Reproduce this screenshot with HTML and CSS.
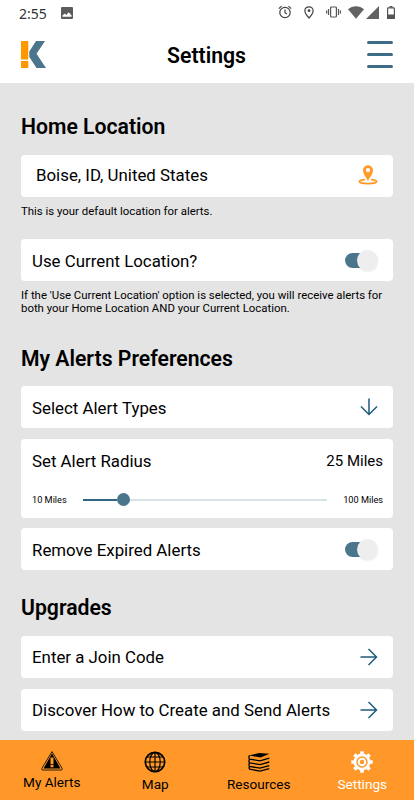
FILE: index.html
```html
<!DOCTYPE html>
<html lang="en">
<head>
    <meta charset="UTF-8">
    <meta name="viewport" content="width=device-width, initial-scale=1.0">
    <title>Settings</title>
    <link rel="stylesheet" href="styles.css">
</head>
<body>
    <div class="status-bar">
        <span class="time">2:55</span>
        <svg class="picture" width="12" height="12" viewBox="0 0 12 12"><rect width="12" height="12" rx="1" fill="#5c5c5c"/><path d="M1.5 9.8V8.6L3.7 6.4l1.5 1.5 2.5-2.6 2.8 3v1.5z" fill="#fff"/></svg>
        <div class="status-icons">
            <svg width="14" height="14" viewBox="0 0 14 14" fill="none" stroke="#444" stroke-width="1.2"><circle cx="7" cy="7.500" r="5.200"/><path d="M7 4.500v3.200l2 1.300M.8 3.600L3.600 1.100M13.200 3.600L10.400 1.100"/></svg>
            <svg class="pin-icon" width="10" height="13" viewBox="0 0 10 13"><path d="M5 .8C2.600.8.9 2.500.9 4.800.9 7.700 5 12 5 12s4.100-4.300 4.100-7.200C9.100 2.500 7.400.8 5 .8z" fill="none" stroke="#444" stroke-width="1.200"/><circle cx="5" cy="4.700" r="1.400" fill="#444"/></svg>
            <svg class="vibrate-icon" width="15" height="12" viewBox="0 0 15 12" fill="none" stroke="#555" stroke-width="1.200"><rect x="4.600" y="1" width="5.800" height="10" rx=".8"/><path d="M2.500 3v6M.6 4.500v3M12.500 3v6M14.400 4.500v3"/></svg>
            <svg class="wifi-icon" width="16" height="13" viewBox="0 0 16 13"><path d="M0 3.200C4.500-.8 11.500-.8 16 3.200L8 12.800z" fill="#626262"/></svg>
            <svg class="signal-icon" width="13" height="13" viewBox="0 0 13 13"><path d="M13 0v13H0z" fill="#626262"/></svg>
            <svg class="battery-icon" width="8" height="13" viewBox="0 0 8 13"><path d="M2.500 0h3v1.500h-3zM0 8.500h8V13H0z" fill="#555"/><rect x=".6" y="1.800" width="6.800" height="10.600" rx=".6" fill="none" stroke="#555" stroke-width="1.200"/></svg>
        </div>
    </div>
    <header class="header">
        <svg class="logo" width="25" height="27" viewBox="0 0 25 27">
            <path d="M0 0h7.300v18.500H0zM0 20h7.300v7H0z" fill="#ff9800"/>
            <path d="M15 0h9l-8.500 12.800L25 27h-9.500L8.300 16V10.500z" fill="#4b758c"/>
        </svg>
        <h1>Settings</h1>
        <div class="menu"><span></span><span></span><span></span></div>
    </header>

    <main>
        <h2>Home Location</h2>
        <div class="card location">
            <span>Boise, ID, United States</span>
            <svg width="20" height="20" viewBox="0 0 20 20">
                <path d="M7 14.600c-3 .2-5.600.9-5.600 2 0 1.200 3.700 2 8.600 2s8.600-.8 8.600-2c0-1.100-2.600-1.800-5.600-2" fill="none" stroke="#ff9a28" stroke-width="1.900"/>
                <path fill-rule="evenodd" d="M10 .2a5 5 0 0 0-5 5c0 3.800 3.300 7 5 10.800 1.700-3.800 5-7 5-10.800a5 5 0 0 0-5-5zm0 2.900a2.100 2.100 0 1 1 0 4.200 2.100 2.100 0 0 1 0-4.200z" fill="#ff9a28"/>
            </svg>
        </div>
        <p class="note">This is your default location for alerts.</p>
        <div class="card">
            <span class="label">Use Current Location?</span>
            <div class="toggle"></div>
        </div>
        <p class="note">If the 'Use Current Location' option is selected, you will receive alerts for<br>both your Home Location AND your Current Location.</p>

        <h2 class="preferences">My Alerts Preferences</h2>
        <div class="card-list">
            <div class="card">
                <span class="label">Select Alert Types</span>
                <svg class="arrow" width="18" height="18" viewBox="0 0 18 18"><path d="M9 .5v16M1 8.500l8 8 8-8"/></svg>
            </div>
            <div class="card radius">
                <div class="radius-top">
                    <span>Set Alert Radius</span>
                    <span class="miles">25 Miles</span>
                </div>
                <div class="radius-slider">
                    <span>10 Miles</span>
                    <div class="track"><div class="fill"></div><div class="thumb"></div></div>
                    <span>100 Miles</span>
                </div>
            </div>
            <div class="card">
                <span class="label">Remove Expired Alerts</span>
                <div class="toggle"></div>
            </div>
        </div>

        <h2 class="upgrades">Upgrades</h2>
        <div class="card-list">
            <div class="card">
                <span>Enter a Join Code</span>
                <svg class="arrow" width="18" height="18" viewBox="0 0 18 18"><path d="M.5 9h16M8.500 1l8 8-8 8"/></svg>
            </div>
            <div class="card">
                <span>Discover How to Create and Send Alerts</span>
                <svg class="arrow" width="18" height="18" viewBox="0 0 18 18"><path d="M.5 9h16M8.500 1l8 8-8 8"/></svg>
            </div>
        </div>
    </main>

    <nav class="tabs">
        <a class="tab">
            <svg width="22" height="20" viewBox="0 0 22 20"><path d="M11 .6L21.200 17.500Q21.500 19 20 19H2Q.5 19 .8 17.500z" fill="none" stroke="#111" stroke-width=".9" stroke-linejoin="round"/><path d="M11 2.400L19.500 17.500h-17z" fill="#000"/><path d="M9.500 6.500h3v6.700h-3zM9.500 14h3v2.300h-3z" fill="#ff9a28"/></svg>
            <span>My Alerts</span>
        </a>
        <a class="tab">
            <svg width="22" height="22" viewBox="0 0 22 22" fill="none" stroke="#000" stroke-width="1.200"><circle cx="11" cy="11" r="9.700" stroke-width="1.700"/><ellipse cx="11" cy="11" rx="5.200" ry="9.700"/><path d="M11 1v20M1 11h20M3 6h16M3 16h16"/></svg>
            <span>Map</span>
        </a>
        <a class="tab">
            <svg width="22" height="22" viewBox="0 0 22 22"><path d="M1 4.500L11 2l10.500.8L12.500 6.500z" fill="#000"/><g fill="none" stroke="#000" stroke-width="1.300"><path d="M1.500 4.400Q.3 6.600 1.500 8.100l10.500 1.700 9.300-2.600"/><path d="M1.500 8.300Q.4 10.200 1.500 11.800l10.500 1.800 9.300-2.600"/><path d="M1.500 12Q.4 13.900 1.500 15.400l10.500 1.800 9.300-2.600"/><path d="M1.500 15.600Q.6 17 1.700 18.200L12 20.100l9.300-2.500"/></g></svg>
            <span>Resources</span>
        </a>
        <a class="tab active">
            <svg width="22" height="22" viewBox="0 0 22 22" fill="none" stroke="#fff"><circle cx="11" cy="11" r="7.100" stroke-width="2.800"/><circle cx="11" cy="11" r="3.200" stroke-width="2"/><path d="M11 .3v3.500M11 18.200v3.500M.3 11h3.500M18.200 11h3.500M3.430 3.430l2.500 2.500M16.070 16.070l2.500 2.500M3.430 18.570l2.500-2.500M16.070 5.930l2.500-2.500" stroke-width="3.600"/></svg>
            <span>Settings</span>
        </a>
    </nav>
</body>
</html>
```
FILE: styles.css
```css
* {
    box-sizing: border-box;
}

body {
    margin: 0;
    height: 800px;
    display: flex;
    flex-direction: column;
    overflow: hidden;
    font-family: Roboto, sans-serif;
    color: #000;
    background-color: #e4e4e4;
}

svg {
    display: block;
    flex-shrink: 0;
}

.status-bar {
    height: 26px;
    display: flex;
    align-items: center;
    padding: 0 19px;
    background-color: #fff;
}

.time {
    width: 42px;
    font-family: "Noto Sans", sans-serif;
    font-size: 14px;
    color: #333;
}

.status-icons {
    display: flex;
    align-items: center;
    margin-left: auto;
    padding-bottom: 2px;
}

.pin-icon {
    margin-left: 12px;
}

.vibrate-icon {
    margin-left: 12px;
}

.wifi-icon {
    margin-left: 7px;
}

.signal-icon {
    margin-left: 2px;
}

.battery-icon {
    margin-left: 8px;
}

.header {
    height: 57px;
    display: flex;
    justify-content: space-between;
    align-items: center;
    padding: 0 21px;
    background-color: #fff;
}

h1 {
    margin: 2px 0 0;
    font-size: 21.2px;
    font-weight: 600;
    line-height: 26px;
}

.menu {
    width: 26px;
    height: 27px;
    display: flex;
    flex-direction: column;
    justify-content: space-between;
}

.menu span {
    height: 3px;
    border-radius: 2px;
    background-color: #3d6c87;
}

main {
    flex: 1;
    padding: 31px 21px 0;
}

h2 {
    margin: 0 0 15px;
    font-size: 21.2px;
    font-weight: 600;
    line-height: 26px;
}

.card {
    height: 42px;
    display: flex;
    justify-content: space-between;
    align-items: center;
    padding: 0 15px 0 11px;
    border-radius: 4px;
    background-color: #fff;
    font-size: 16.85px;
    line-height: 20px;
}

.label {
    padding-top: 2px;
}

.location {
    padding: 0 15px 2px;
}

.note {
    margin: 7.5px 0 21px;
    font-size: 11.4px;
    line-height: 13.5px;
}

.preferences {
    margin-top: 30.5px;
    margin-bottom: 14px;
}

.upgrades {
    margin-top: 25px;
}

.card-list {
    display: flex;
    flex-direction: column;
    gap: 10.5px;
}

.arrow {
    fill: none;
    stroke: #1f5b7c;
    stroke-width: 1.5;
}

.toggle {
    width: 33px;
    height: 15px;
    display: flex;
    align-items: center;
    justify-content: flex-end;
    border-radius: 8px;
    background: linear-gradient(to right, #4b758c 20px, transparent 20px);
}

.toggle::after {
    content: "";
    width: 21px;
    height: 21px;
    flex-shrink: 0;
    border-radius: 50%;
    background-color: #eee;
    box-shadow: 0 1px 2px rgba(0, 0, 0, 0.08);
}

.radius {
    height: 79px;
    flex-direction: column;
    align-items: stretch;
    padding: 12px 10px 11px 11px;
}

.radius-top,
.radius-slider {
    display: flex;
    justify-content: space-between;
    align-items: center;
}

.miles {
    font-size: 15px;
}

.radius-slider {
    height: 14px;
    font-size: 9.2px;
}

.track {
    width: 244px;
    height: 2px;
    display: flex;
    align-items: center;
    background-color: #d6e1e8;
}

.fill {
    width: 34px;
    height: 2px;
    background-color: #2f6782;
}

.thumb {
    width: 13px;
    height: 13px;
    border-radius: 50%;
    background-color: #4b758c;
}

.tabs {
    height: 60px;
    display: grid;
    grid-template-columns: repeat(4, 1fr);
    background-color: #ff9829;
}

.tab {
    display: flex;
    flex-direction: column;
    align-items: center;
    padding-top: 11px;
    gap: 3px;
    font-size: 13.6px;
    line-height: 16px;
}

.active {
    color: #fff;
}
```
